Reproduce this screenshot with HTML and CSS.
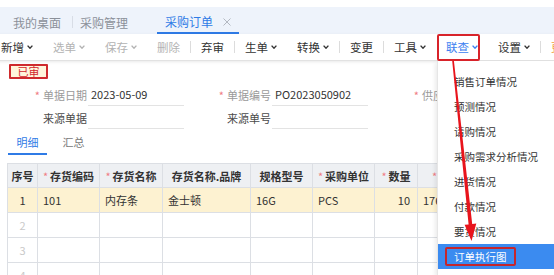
FILE: index.html
```html
<!DOCTYPE html>
<html lang="zh-CN">
<head>
<meta charset="utf-8">
<title>采购订单</title>
<link rel="stylesheet" href="styles.css">
</head>
<body>
<div class="page">
  <div class="topline"></div>
  <div class="tabbar">
    <span class="tab tab1">我的桌面</span>
    <span class="tsep"></span>
    <span class="tab tab2">采购管理</span>
    <span class="tab active">采购订单<svg class="close" viewBox="0 0 8 8"><path d="M0.5 0.5L7.5 7.5M7.5 0.5L0.5 7.5" stroke="#b3b8c1" stroke-width="1" fill="none"/></svg></span>
  </div>
  <div class="toolbar">
    <span class="tbi">新增<svg class="chev" viewBox="0 0 6 4"><path d="M0.6 0.6L3 3.2L5.4 0.6" fill="none" stroke="currentColor" stroke-width="1.4"/></svg></span>
    <span class="tbi dis">选单<svg class="chev" viewBox="0 0 6 4"><path d="M0.6 0.6L3 3.2L5.4 0.6" fill="none" stroke="currentColor" stroke-width="1.4"/></svg></span>
    <span class="tbi dis">保存<svg class="chev" viewBox="0 0 6 4"><path d="M0.6 0.6L3 3.2L5.4 0.6" fill="none" stroke="currentColor" stroke-width="1.4"/></svg></span>
    <span class="tbi dis">删除</span>
    <span class="sep"></span>
    <span class="tbi">弃审</span>
    <span class="sep"></span>
    <span class="tbi">生单<svg class="chev" viewBox="0 0 6 4"><path d="M0.6 0.6L3 3.2L5.4 0.6" fill="none" stroke="currentColor" stroke-width="1.4"/></svg></span>
    <span class="tbi">转换<svg class="chev" viewBox="0 0 6 4"><path d="M0.6 0.6L3 3.2L5.4 0.6" fill="none" stroke="currentColor" stroke-width="1.4"/></svg></span>
    <span class="sep"></span>
    <span class="tbi">变更</span>
    <span class="sep"></span>
    <span class="tbi">工具<svg class="chev" viewBox="0 0 6 4"><path d="M0.6 0.6L3 3.2L5.4 0.6" fill="none" stroke="currentColor" stroke-width="1.4"/></svg></span>
    <span class="tbi blue">联查<svg class="chev" viewBox="0 0 6 4"><path d="M0.6 0.6L3 3.2L5.4 0.6" fill="none" stroke="currentColor" stroke-width="1.4"/></svg></span>
    <span class="tbi">设置<svg class="chev" viewBox="0 0 6 4"><path d="M0.6 0.6L3 3.2L5.4 0.6" fill="none" stroke="currentColor" stroke-width="1.4"/></svg></span>
    <span class="sep"></span>
    <span class="tbi orange">更多</span>
  </div>
  <div class="content">
    <div class="badge">已审</div>
    <div class="form">
      <div class="frow">
        <div class="field"><span class="flabel req-label"><i class="req">*</i>单据日期</span><span class="fval">2023-05-09</span></div>
        <div class="field"><span class="flabel req-label"><i class="req">*</i>单据编号</span><span class="fval">PO2023050902</span></div>
        <div class="field"><span class="flabel req-label"><i class="req">*</i>供应商</span><span class="fval"></span></div>
      </div>
      <div class="frow">
        <div class="field"><span class="flabel">来源单据</span><span class="fval"></span></div>
        <div class="field"><span class="flabel">来源单号</span><span class="fval"></span></div>
      </div>
    </div>
    <div class="subtabs">
      <span class="st active">明细</span>
      <span class="st">汇总</span>
    </div>
    <table class="grid">
      <colgroup>
        <col class="c-seq"><col class="c-code"><col class="c-name"><col class="c-brand"><col class="c-spec"><col class="c-unit"><col class="c-qty"><col class="c-price"><col class="c-more">
      </colgroup>
      <thead>
        <tr>
          <th>序号</th>
          <th><i class="hreq">*</i>存货编码</th>
          <th><i class="hreq">*</i>存货名称</th>
          <th>存货名称.品牌</th>
          <th>规格型号</th>
          <th><i class="hreq">*</i>采购单位</th>
          <th><i class="hreq">*</i>数量</th>
          <th><i class="hreq">*</i>含税单价</th>
          <th>金额</th>
        </tr>
      </thead>
      <tbody>
        <tr class="sel">
          <td class="seq">1</td><td>101</td><td>内存条</td><td>金士顿</td><td>16G</td><td>PCS</td><td class="num">10</td><td>176.00</td><td></td>
        </tr>
        <tr><td class="seq dim">2</td><td></td><td></td><td></td><td></td><td></td><td></td><td></td><td></td></tr>
        <tr><td class="seq dim">3</td><td></td><td></td><td></td><td></td><td></td><td></td><td></td><td></td></tr>
        <tr><td class="seq dim">4</td><td></td><td></td><td></td><td></td><td></td><td></td><td></td><td></td></tr>
      </tbody>
    </table>
  </div>

  <div class="menu">
    <div class="mi">销售订单情况</div>
    <div class="mi">预测情况</div>
    <div class="mi">请购情况</div>
    <div class="mi">采购需求分析情况</div>
    <div class="mi">进货情况</div>
    <div class="mi">付款情况</div>
    <div class="mi">要货情况</div>
    <div class="mi hl"><span class="mark">订单执行图</span></div>
  </div>

  <div class="annot-box"></div>
  <svg class="arrow" viewBox="0 0 554 275" width="554" height="275">
    <polygon points="452.2,61 453.9,60.8 472.2,224 476.3,223.6 471.5,241 464.6,224.8 468.6,224.4" fill="#e8141c"/>
  </svg>
</div>
</body>
</html>
```

FILE: styles.css
```css
* {
  box-sizing: border-box;
  margin: 0;
  padding: 0;
}

body {
  margin: 0;
  width: 554px;
  height: 275px;
  overflow: hidden;
  background: #fff;
  font-family: "Noto Sans CJK SC", "Noto Sans", sans-serif;
  font-size: 11px;
  color: #333;
}

.page {
  position: relative;
  width: 554px;
  height: 275px;
  overflow: hidden;
}

.topline {
  height: 7px;
  background: #fff;
}

/* top tab bar */
.tabbar {
  height: 27px;
  padding-top: 4px;
  background: #eef3fb;
  display: flex;
  align-items: stretch;
  font-size: 12px;
  color: #8b9099;
}

.tab {
  display: flex;
  align-items: center;
  line-height: 1;
}

.tab1 {
  margin-left: 13px;
  margin-right: 11px;
}

.tsep {
  width: 1px;
  background: #d8dde6;
  margin: 5px 0 6px;
}

.tab2 {
  margin-left: 7px;
}

.tab.active {
  margin-left: 29px;
  padding: 0 8px;
  color: #2f7be6;
  border-bottom: 2px solid #2f7be6;
}

.close {
  width: 8px;
  height: 8px;
  margin-left: 10px;
}

/* toolbar */
.toolbar {
  height: 27px;
  display: flex;
  align-items: center;
  margin-left: -9px;
  white-space: nowrap;
  font-size: 11.5px;
  border-bottom: 1px solid #e2e2e2;
  box-shadow: 0 1px 3px rgba(0, 0, 0, 0.09);
  position: relative;
  z-index: 1;
  background: #fff;
}

.tbi {
  display: flex;
  align-items: center;
  gap: 3px;
  padding: 0 10px;
  color: #333;
  flex: none;
}

.tbi.dis {
  color: #b3b3b3;
}

.tbi.blue {
  color: #3b7ef0;
}

.tbi.orange {
  color: #f2a13b;
}

.chev {
  width: 6px;
  height: 4px;
  flex: none;
}

.sep {
  width: 1px;
  height: 12px;
  background: #dcdcdc;
  flex: none;
}

/* content */
.badge {
  margin: 3px 0 0 9px;
  width: 39px;
  height: 15px;
  border: 2px solid #cf2a2d;
  border-radius: 1px;
  background: #fff5db;
  color: #d2262b;
  font-size: 11px;
  line-height: 11px;
  text-align: center;
}

.form {
  margin-top: 4px;
}

.frow {
  display: flex;
  height: 23px;
}

.field {
  display: flex;
  align-items: stretch;
}

.flabel {
  width: 88px;
  display: flex;
  align-items: center;
  justify-content: flex-end;
  padding-right: 1px;
  color: #4a4a4a;
}

.req-label {
  color: #9a9a9a;
}

.req {
  font-style: normal;
  color: #f07c84;
  margin-right: 3px;
}

.fval {
  width: 96px;
  display: flex;
  align-items: center;
  padding-left: 3px;
  border-bottom: 1px solid #e3e3e3;
  color: #333;
}

.subtabs {
  margin-top: 2px;
  height: 24px;
  display: flex;
  gap: 7px;
  padding-left: 8px;
}

.st {
  display: flex;
  align-items: center;
  padding: 0 8.5px;
  color: #777;
  border-bottom: 2px solid transparent;
}

.st.active {
  color: #2f7be6;
  border-bottom-color: #2f7be6;
}

/* grid */
.grid {
  margin: 8px 0 0 7px;
  border-collapse: collapse;
  table-layout: fixed;
  width: 550px;
  font-size: 11px;
}

.c-seq { width: 30px; }
.c-code { width: 62px; }
.c-name { width: 63px; }
.c-brand { width: 88px; }
.c-spec { width: 62px; }
.c-unit { width: 62px; }
.c-qty { width: 43px; }
.c-price { width: 80px; }
.c-more { width: 60px; }

.grid th,
.grid td {
  border: 1px solid #dcdfe4;
  white-space: nowrap;
  overflow: hidden;
}

.grid th {
  height: 24px;
  background: #eef0f3;
  font-weight: bold;
  color: #333;
  text-align: center;
  padding: 0 2px;
}

.hreq {
  font-style: normal;
  font-weight: normal;
  color: #f07c84;
  margin-right: 2px;
}

.grid td {
  height: 25px;
  padding: 0 5px;
  color: #333;
  background: #fff;
}

.grid tr.sel td {
  background: #fdf2d1;
}

.grid td.seq {
  text-align: center;
  padding: 0;
}

.grid td.dim {
  color: #c9c9c9;
}

.grid td.num {
  text-align: right;
  padding-right: 7px;
}

/* dropdown menu (overlay) */
.menu {
  position: absolute;
  left: 437px;
  top: 61px;
  right: 0;
  bottom: 0;
  z-index: 2;
  background: #fff;
  border-left: 1px solid #e6e6e6;
  box-shadow: -2px 2px 4px rgba(0, 0, 0, 0.08);
  padding-top: 8px;
}

.mi {
  height: 25px;
  display: flex;
  align-items: center;
  padding-left: 16px;
  font-size: 10.5px;
  color: #333;
  white-space: nowrap;
}

.mi.hl {
  background: #3b8bf0;
  color: #fff;
  padding-left: 7px;
}

.mark {
  display: inline-block;
  height: 19px;
  line-height: 15px;
  padding: 0 7px;
  border: 2px solid #c5262c;
  border-radius: 2px;
}

/* annotations (overlays) */
.annot-box {
  position: absolute;
  left: 437px;
  top: 34px;
  width: 43px;
  height: 27px;
  border: 2px solid #d8232a;
  border-radius: 2px;
  z-index: 3;
}

.arrow {
  position: absolute;
  left: 0;
  top: 0;
  z-index: 4;
  pointer-events: none;
}
```
